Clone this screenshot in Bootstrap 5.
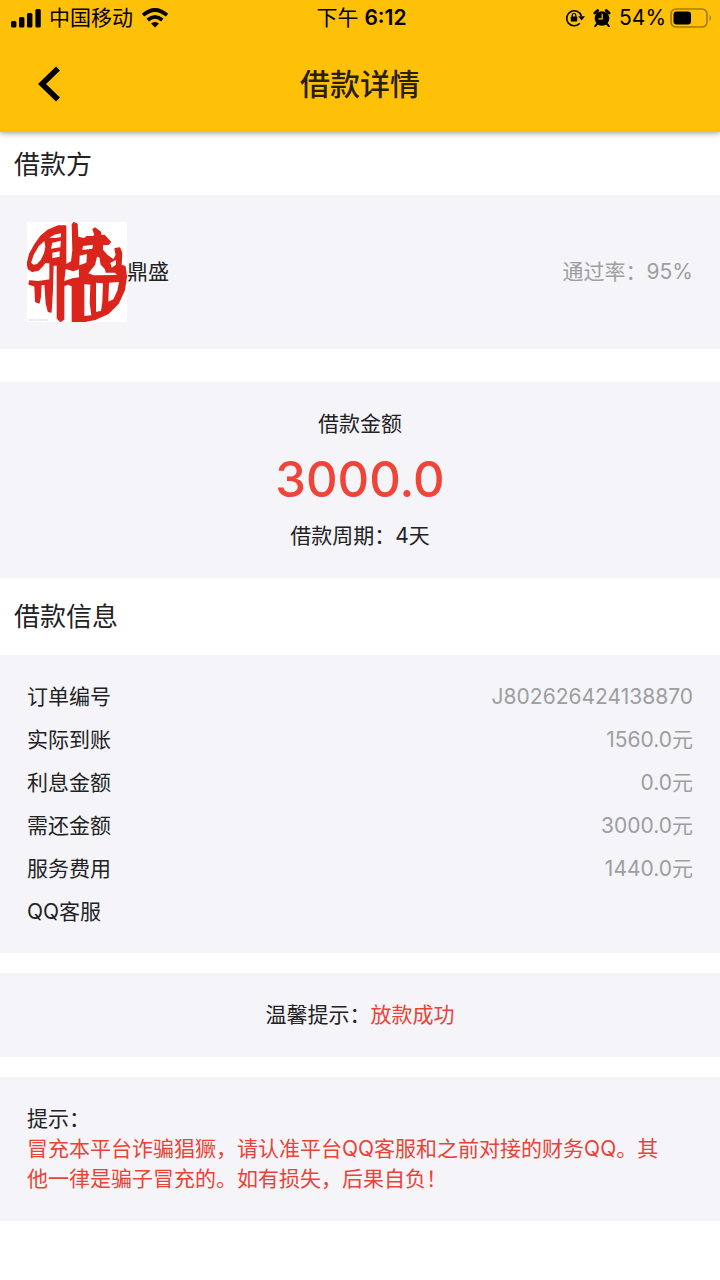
<!DOCTYPE html>
<html lang="zh-CN">
<head>
<meta charset="utf-8">
<meta name="viewport" content="width=device-width, initial-scale=1">
<title>借款详情</title>
<link href="https://cdn.jsdelivr.net/npm/bootstrap@5.3.0/dist/css/bootstrap.min.css" rel="stylesheet">
<style>
  body { font-family: Inter, "Noto Sans CJK SC", sans-serif; font-size: 21px; line-height: 30px; color: #222; background: #fff; }
  .app-header { background: #ffc107; color: #000; box-shadow: 0 1px 6px rgba(0,0,0,.4); }
  .status-bar { height: 36px; padding: 0 8px 0 11px; }
  .status-side { flex: 1 1 0; }
  .title-bar { height: 96px; padding: 0 36px; }
  .title-bar h1 { font-size: 30px; line-height: 40px; font-weight: 500; color: #281f05; }
  .back-btn { width: 28px; line-height: 0; }
  .section-title { font-size: 26px; line-height: 30px; font-weight: 400; padding: 18px 14px 15px; margin: 0; }
  .section-title-tall { padding: 24px 14px 23px; }
  .panel { background: #f4f4f9; padding: 27px; }
  .panel-list { padding: 20px 27px; }
  .seal { width: 100px; height: 100px; }
  .muted-value { color: #9e9e9e; }
  .alert-text { color: #ea4336; }
  .amount { font-size: 49px; line-height: 82px; font-weight: 500; color: #f04438; }
  .info-table { line-height: 29px; }
  .info-table th, .info-table td { height: 43px; padding: 0 0 1px; font-weight: 400; vertical-align: middle; }
  .gap-strip { margin-top: 20px; }
  .gap-wide { margin-top: 33px; }
</style>
</head>
<body>
<header class="app-header position-relative">
  <div class="status-bar d-flex align-items-center">
    <div class="status-side d-flex align-items-center">
      <svg width="30" height="20" viewBox="0 0 30 20" aria-hidden="true"><rect x="0" y="13" width="5.4" height="6.5" rx="1.5"/><rect x="8" y="9" width="5.4" height="10.5" rx="1.5"/><rect x="16" y="5" width="5.4" height="14.5" rx="1.5"/><rect x="24.4" y="1" width="5.4" height="18.5" rx="1.5"/></svg>
      <span class="mx-2">中国移动</span>
      <svg width="28" height="20" viewBox="0 0 28 20" aria-hidden="true"><g fill="none" stroke="#000" stroke-width="3.7"><path d="M2 7.2Q14-3.2 26 7.2"/><path d="M6.7 12Q14 5.8 21.3 12"/></g><path d="M10 15.6Q14 12.4 18 15.6L14 19.6Z"/></svg>
    </div>
    <div>下午 <span class="fw-semibold">6:12</span></div>
    <div class="status-side d-flex align-items-center justify-content-end">
      <svg class="me-2" width="20" height="20" viewBox="0 0 20 20" aria-hidden="true"><path d="M14.8 15.2A7.5 7.5 0 1 1 16.3 8" fill="none" stroke="#000" stroke-width="1.7"/><path d="M13.2 8.2H20L16.6 12.4Z"/><rect x="5.8" y="8.6" width="6.4" height="5" rx=".7"/><path d="M7.2 9V7.3a1.8 1.8 0 0 1 3.6 0V9" fill="none" stroke="#000" stroke-width="1.2"/></svg>
      <svg class="me-2" width="18" height="20" viewBox="0 0 18 20" aria-hidden="true"><circle cx="9" cy="10.5" r="7.3"/><path d="M2 5 4.6 2.6M16 5 13.4 2.6" stroke="#000" stroke-width="3" stroke-linecap="round"/><path d="m4 16-1.8 2.2M14 16l1.8 2.2" stroke="#000" stroke-width="2" stroke-linecap="round"/><path d="M9.2 5.8v5H5.4" fill="none" stroke="#ffc107" stroke-width="1.2"/></svg>
      <span class="me-1">54%</span>
      <svg width="42" height="20" viewBox="0 0 42 20" aria-hidden="true"><rect x="1" y="1" width="36" height="18" rx="5" fill="none" stroke="#a67d05" stroke-width="1.7"/><rect x="3.5" y="3.5" width="17.5" height="13" rx="3"/><path d="M39.5 6.5q3 3.5 0 7Z" fill="#a67d05"/></svg>
    </div>
  </div>
  <div class="title-bar d-flex align-items-center justify-content-between">
    <button type="button" class="back-btn btn p-0 border-0" aria-label="返回"><svg width="28" height="36" viewBox="0 0 28 36" aria-hidden="true"><path d="M22 2.5 6 18l16 15.5" fill="none" stroke="#000" stroke-width="5.6"/></svg></button>
    <h1 class="m-0">借款详情</h1>
    <span class="back-btn"></span>
  </div>
</header>

<main>
  <h2 class="section-title">借款方</h2>
  <section class="panel d-flex align-items-center justify-content-between">
    <div class="d-flex align-items-center">
      <svg class="seal" viewBox="36 36 300 300" role="img" aria-label="鼎盛"><path fill="#fff" d="M36 36h300v300H36z"/>
        <path fill="#da251d" stroke="#da251d" stroke-width="4" stroke-linejoin="round" d="M152 48H128L100 60 78 78 60 103 44 132 37 160 40 176 52 184 70 180 82 168 90 157 105 158V210L70 215 44 213 42 222 60 228 62 275 72 279 76 260 78 224 90 222 94 280 100 304 108 306 112 240 114 165 127 165V325L136 334 146 328V228L158 222 172 228V335L205 335 240 328 280 310 310 280 328 240 334 200 330 170 318 165 320 130 314 114 300 116 304 135 296 150 275 135 262 120V104L280 103 286 96 268 76 258 78 256 66 240 54 234 58 240 74 236 80H215L208 86 188 82 186 42 176 38 172 44 174 120 170 155 152 165Z"/>
        <path fill="#fff" d="M88 93 71 109 56 135 48 158 56 164 66 162 77 150 87 130 91 110ZM103 83 118 74 138 70 137 82 118 84ZM112 98 138 92 136 112 108 116ZM112 128 134 124V140L112 145ZM152 177 175 184 192 178V202L172 205 148 213ZM204 108 234 104 232 116 202 120ZM194 137 216 132 214 158 193 166ZM246 140 253 142 257 164 270 178 272 188H300L306 195 236 196 220 190 240 165ZM286 158 303 150 303 164 290 173ZM208 222 226 224 224 280 229 316 208 318ZM243 218 264 220 262 275 258 303 243 305ZM282 218 312 216 307 242 295 268 280 275Z"/>
        <path stroke="#bbb" stroke-width="2" stroke-dasharray="4 1" d="M40 330h60"/></svg>
      <span>鼎盛</span>
    </div>
    <span class="muted-value">通过率：95%</span>
  </section>

  <section class="panel gap-wide text-center">
    <div>借款金额</div>
    <div class="amount">3000.0</div>
    <div>借款周期：4天</div>
  </section>

  <h2 class="section-title section-title-tall">借款信息</h2>
  <section class="panel panel-list">
    <table class="info-table w-100">
      <tbody>
        <tr><th scope="row">订单编号</th><td class="text-end muted-value">J802626424138870</td></tr>
        <tr><th scope="row">实际到账</th><td class="text-end muted-value">1560.0元</td></tr>
        <tr><th scope="row">利息金额</th><td class="text-end muted-value">0.0元</td></tr>
        <tr><th scope="row">需还金额</th><td class="text-end muted-value">3000.0元</td></tr>
        <tr><th scope="row">服务费用</th><td class="text-end muted-value">1440.0元</td></tr>
        <tr><th scope="row">QQ客服</th><td></td></tr>
      </tbody>
    </table>
  </section>

  <section class="panel gap-strip text-center">温馨提示：<span class="alert-text">放款成功</span></section>

  <section class="panel gap-strip">
    <div>提示：</div>
    <p class="alert-text m-0 pe-3">冒充本平台诈骗猖獗，请认准平台QQ客服和之前对接的财务QQ。其他一律是骗子冒充的。如有损失，后果自负！</p>
  </section>
</main>
<script src="https://cdn.jsdelivr.net/npm/bootstrap@5.3.0/dist/js/bootstrap.bundle.min.js"></script>
</body>
</html>
